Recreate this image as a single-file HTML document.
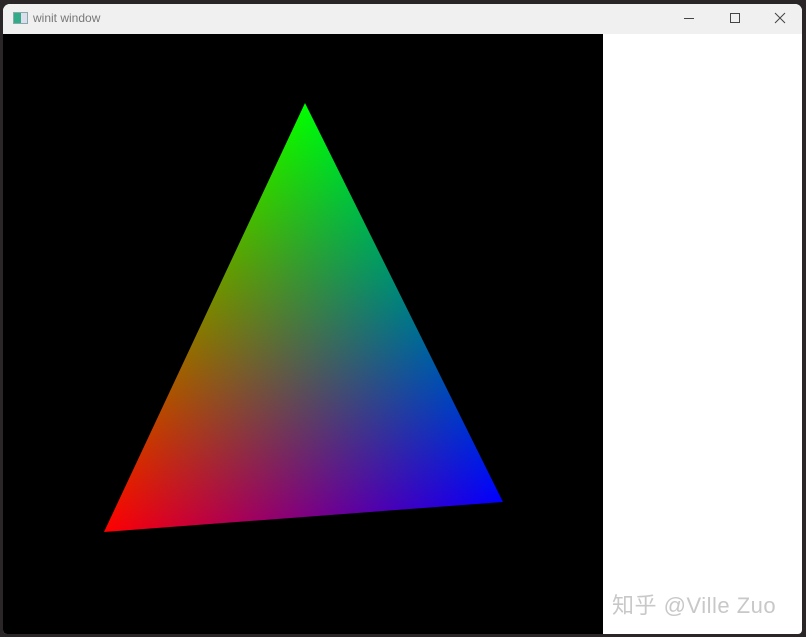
<!DOCTYPE html>
<html><head><meta charset="utf-8"><style>
html,body{margin:0;padding:0;width:806px;height:637px;overflow:hidden;background:#2a2526;font-family:"Liberation Sans","Noto Sans CJK SC",sans-serif;}
.win{position:absolute;left:3px;top:4px;width:799px;height:630px;background:#fff;border-radius:7px 7px 4px 4px;overflow:hidden;}
.title{position:absolute;left:0;top:0;width:799px;height:30px;background:#f0f0f0;}
.title .t{position:absolute;left:30px;top:7px;font-size:12px;color:#777;}
.icon{position:absolute;left:10px;top:8px;width:13px;height:10px;border:1px solid #8aa;background:linear-gradient(90deg,#3a8 0 55%,#dde 55%);}
.black{position:absolute;left:0;top:30px;width:600px;height:600px;background:#000;}
.wm{position:absolute;left:612px;top:588px;font-size:22px;color:#c8c8c8;letter-spacing:0.5px;}
</style></head><body>
<div class="win">
 <div class="title"><div class="icon"></div><div class="t">winit window</div>
  <svg width="799" height="30" style="position:absolute;left:0;top:0">
   <line x1="681" y1="14.5" x2="691" y2="14.5" stroke="#444" stroke-width="1"/>
   <rect x="727.5" y="9.5" width="9" height="9" fill="none" stroke="#444" stroke-width="1"/>
   <path d="M772 9L782 19M782 9L772 19" stroke="#444" stroke-width="1"/>
  </svg>
 </div>
 <div class="black"></div>
</div>
<svg width="806" height="637" style="position:absolute;left:0;top:0;isolation:isolate">
 <defs>
  <linearGradient id="r" gradientUnits="userSpaceOnUse" x1="104" y1="532" x2="436.1" y2="367.2"><stop offset="0" stop-color="#f00"/><stop offset="1" stop-color="#000"/></linearGradient>
  <linearGradient id="g" gradientUnits="userSpaceOnUse" x1="305" y1="103" x2="335.9" y2="514.6"><stop offset="0" stop-color="#0f0"/><stop offset="1" stop-color="#000"/></linearGradient>
  <linearGradient id="b" gradientUnits="userSpaceOnUse" x1="503" y1="502" x2="187.4" y2="354.1"><stop offset="0" stop-color="#00f"/><stop offset="1" stop-color="#000"/></linearGradient>
 </defs>
 <g style="isolation:isolate">
 <polygon points="305,103 503,502 104,532" fill="#000"/>
 <polygon points="305,103 503,502 104,532" fill="url(#r)" style="mix-blend-mode:plus-lighter"/>
 <polygon points="305,103 503,502 104,532" fill="url(#g)" style="mix-blend-mode:plus-lighter"/>
 <polygon points="305,103 503,502 104,532" fill="url(#b)" style="mix-blend-mode:plus-lighter"/>
 </g>
</svg>
<div class="wm">知乎 @Ville Zuo</div>
</body></html>
